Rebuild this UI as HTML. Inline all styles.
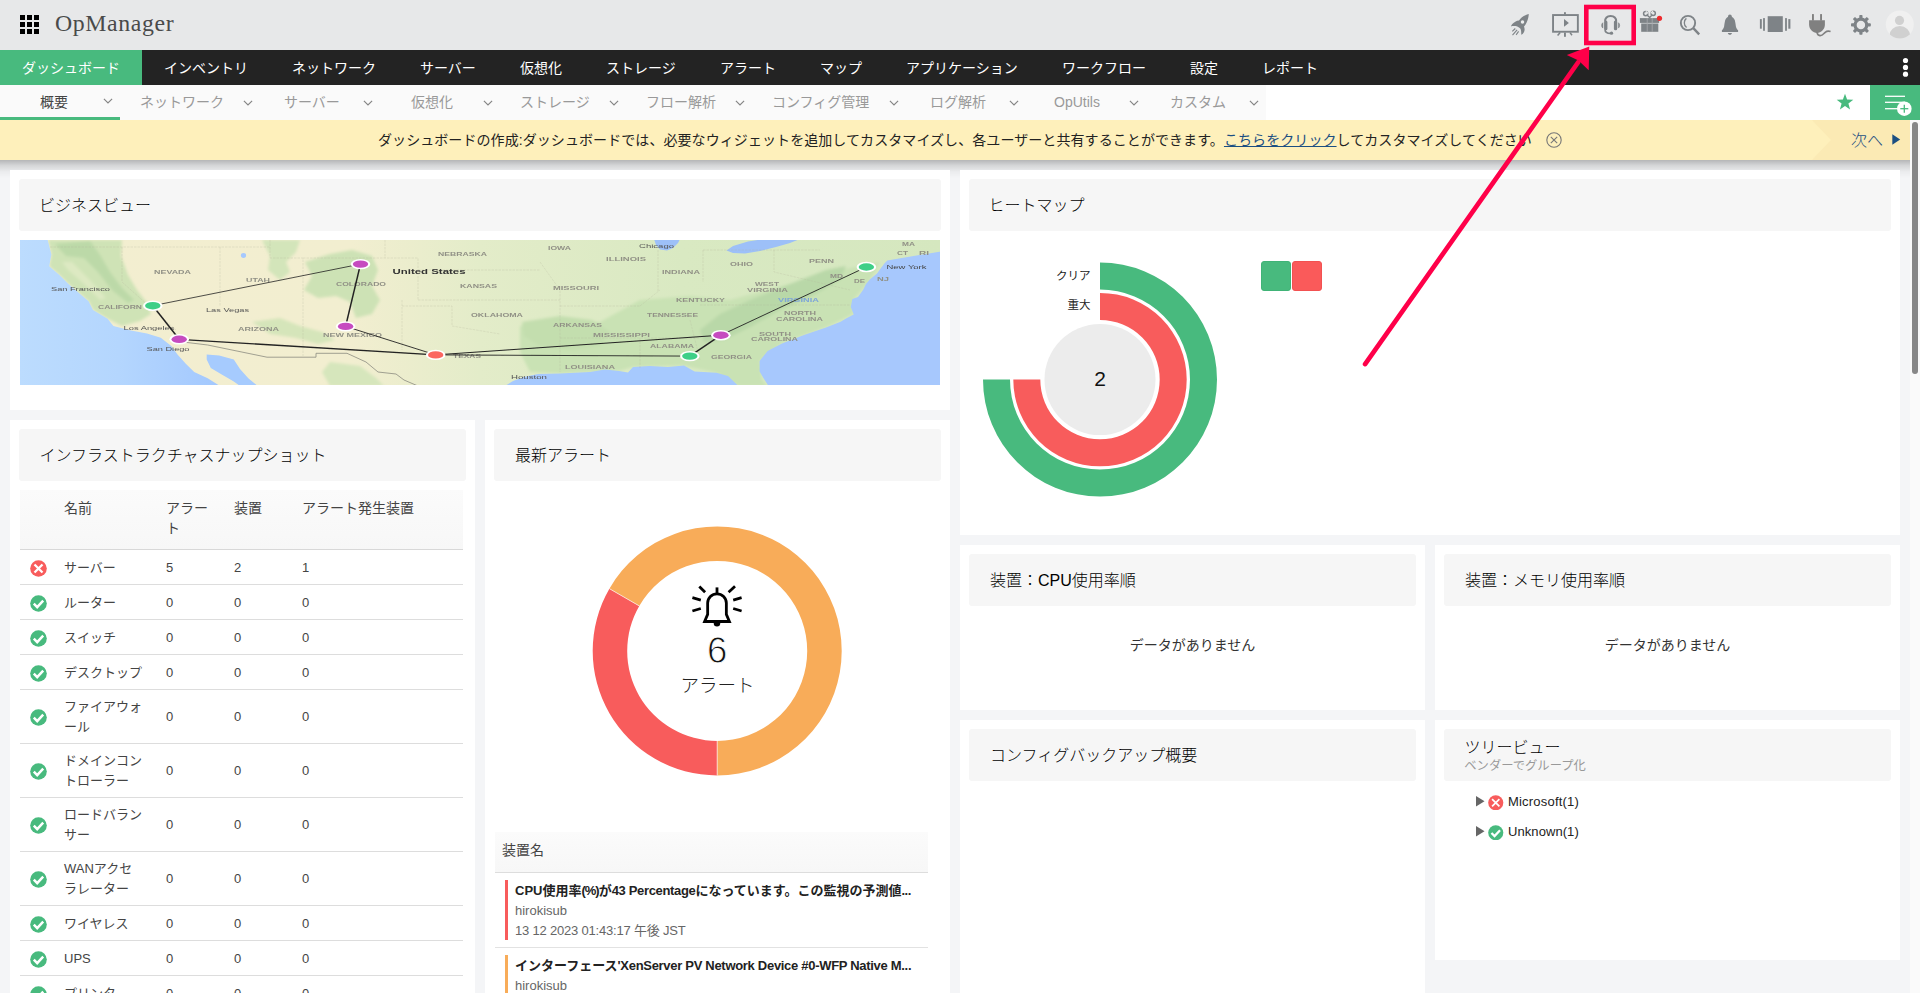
<!DOCTYPE html>
<html lang="ja">
<head>
<meta charset="utf-8">
<title>OpManager</title>
<style>
*{box-sizing:border-box;margin:0;padding:0}
html,body{width:1920px;height:993px;overflow:hidden;background:#f4f5f7}
body{font-family:"Liberation Sans","Noto Sans CJK JP",sans-serif;font-size:14px;color:#333;position:relative}
.abs{position:absolute}
#page{position:absolute;left:0;top:0;width:1920px;height:993px;overflow:hidden;background:#f4f5f7}
/* header */
#hdr{position:absolute;left:0;top:0;width:1920px;height:50px;background:#e7e8e9}
#logo{position:absolute;left:55px;top:8px;font-family:"Liberation Serif",serif;font-size:23.8px;line-height:30px;letter-spacing:.62px;color:#4a4a4a;white-space:nowrap}
/* nav */
#nav{position:absolute;left:0;top:50px;width:1920px;height:35px;background:#232323}
#nav .t{position:absolute;top:0;height:35px;line-height:36px;color:#fff;font-size:14px;white-space:nowrap}
#nav .on{left:0;width:142px;background:#48ba7e;padding-left:22px}
/* subnav */
#sub{position:absolute;left:0;top:85px;width:1920px;height:35px;background:#fff}
#sub .bg{position:absolute;left:0;top:0;width:1266px;height:35px;background:#fafafa}
#sub .s{position:absolute;top:0;height:35px;line-height:35px;color:#999;font-size:14px;white-space:nowrap}
#sub .cv{position:absolute;top:10px;width:10px;height:10px}
/* banner */
#ban{position:absolute;left:0;top:120px;width:1910px;height:40px;background:#fef0bb}
#bantxt{position:absolute;left:378px;top:0;height:40px;line-height:41px;font-size:14px;letter-spacing:.075px;color:#222;white-space:nowrap}
#bantxt a{color:#1b4f82;text-decoration:underline}
#shadow{position:absolute;left:0;top:160px;width:1910px;height:18px;background:linear-gradient(to bottom,rgba(0,0,0,.26),rgba(0,0,0,.13) 30%,rgba(0,0,0,.04) 65%,rgba(0,0,0,0))}
/* cards */
.card{position:absolute;background:#fff}
.tb{position:absolute;background:#f6f6f6;border-radius:3px;height:52px}
.tt{position:absolute;font-size:16px;line-height:24px;color:#000;font-weight:300;white-space:nowrap}
.nd{position:absolute;font-size:14px;line-height:20px;color:#333;white-space:nowrap;text-align:center}
/* table */
.th{position:absolute;font-size:14px;line-height:20px;color:#444;white-space:nowrap}
.rl{position:absolute;left:20px;width:443px;height:1px;background:#ddd}
.c{position:absolute;font-size:13px;line-height:20px;color:#444;white-space:nowrap}
.ic{position:absolute;width:17px;height:17px}
</style>
</head>
<body>
<div id="page">

<!-- ===== header ===== -->
<div id="hdr">
  <svg class="abs" style="left:20px;top:15px" width="19" height="19" viewBox="0 0 19 19"><g fill="#000"><rect x="0" y="0" width="5" height="5"/><rect x="7" y="0" width="5" height="5"/><rect x="14" y="0" width="5" height="5"/><rect x="0" y="7" width="5" height="5"/><rect x="7" y="7" width="5" height="5"/><rect x="14" y="7" width="5" height="5"/><rect x="0" y="14" width="5" height="5"/><rect x="7" y="14" width="5" height="5"/><rect x="14" y="14" width="5" height="5"/></g></svg>
  <div id="logo">OpManager</div>
  <!--ICONS-->
<svg class="abs" style="left:1500px;top:0" width="420" height="50" viewBox="1500 0 420 50">
<path d="M1528.8 14.1 C1526.5 14.6 1523.6 16 1521.9 17.3 C1520.6 18.3 1519.6 19.6 1519 20.6 C1517.6 20.7 1516.6 20.9 1515.7 21.4 C1514.2 22.1 1513.2 23 1512.3 23.9 C1511.6 24.7 1511.1 25.6 1510.9 26.4 C1512 26 1513 25.9 1514 26 C1515.3 26 1516.4 26.1 1517.3 26.4 C1518.6 26.9 1519.6 27.6 1520.3 28.5 C1520.8 29.2 1521 30 1521.1 31 C1521.2 32.3 1521.3 33.5 1521.3 34.8 C1522.3 34.3 1523.1 33.6 1523.6 32.7 C1524.3 31.6 1524.7 30.4 1524.6 29.3 C1524.6 28.3 1524.4 27.3 1524 26.4 C1525 25.3 1525.9 24.1 1526.5 22.7 C1527.3 21.2 1527.9 19.6 1528.2 18.1 C1528.5 16.8 1528.7 15.5 1528.8 14.1 Z" fill="#7e8387"/>
<circle cx="1522.5" cy="22" r="1.75" fill="#eceded"/>
<path d="M1515.3 28.5 L1512.3 31.4 M1517.1 29.8 L1512.5 35.2 M1518.6 31.4 L1516.1 34.8" stroke="#7e8387" stroke-width="1.1" fill="none"/>
<rect x="1553.05" y="15.05" width="24.8" height="16.7" fill="none" stroke="#7e8387" stroke-width="1.9"/>
<rect x="1564" y="12.2" width="1.9" height="2.2" fill="#7e8387"/><rect x="1564" y="32.5" width="1.9" height="4.3" fill="#7e8387"/>
<path d="M1564 19.1 L1568.9 22.9 L1564 26.8 Z" fill="#7e8387"/>
<path d="M1560.2 32.6 L1557.6 35.6 M1570 32.6 L1572 35.3" stroke="#7e8387" stroke-width="1.5" fill="none"/>
<path d="M1605.1 21.5 C1605.1 17.6 1607.3 15.9 1610.6 15.9 C1613.9 15.9 1616.2 17.6 1616.2 21.5" fill="none" stroke="#7e8387" stroke-width="2"/>
<rect x="1604.1" y="20.4" width="3.3" height="9.8" rx="1.5" fill="#7e8387"/><rect x="1613.9" y="20.4" width="3.3" height="9.8" rx="1.5" fill="#7e8387"/>
<path d="M1602.9 22.7 C1601.2 23.6 1601.2 27.2 1602.9 28.1 Z M1618.4 22.7 C1620.1 23.6 1620.1 27.2 1618.4 28.1 Z" fill="#7e8387" stroke="#7e8387" stroke-width="0.5"/>
<path d="M1605 29.5 C1605 32 1606.6 33.4 1610.5 33.4" fill="none" stroke="#7e8387" stroke-width="1.6"/>
<circle cx="1611.5" cy="33.2" r="1.65" fill="#7e8387"/>
<rect x="1639.9" y="18.1" width="19.2" height="4.8" fill="#7e8387"/><rect x="1641.2" y="23.5" width="17.1" height="8.3" fill="#7e8387"/>
<path d="M1647.2 18.1 V31.8 M1652.2 18.1 V31.8" stroke="#a9acae" stroke-width="0.8"/>
<circle cx="1645.7" cy="13.6" r="2.15" fill="none" stroke="#7e8387" stroke-width="1.5"/><circle cx="1653.2" cy="13.3" r="2.15" fill="none" stroke="#7e8387" stroke-width="1.5"/>
<path d="M1647.3 15.3 L1649.7 17.6 L1651.7 15.2" fill="none" stroke="#7e8387" stroke-width="1.4"/>
<path d="M1645.8 11.4 L1648.3 13.6 M1653 11 L1650.8 13.4" stroke="#e7e8e9" stroke-width="1.3"/>
<circle cx="1659.5" cy="18.3" r="2.6" fill="#ee2a2e"/>
<circle cx="1688" cy="23" r="7.15" fill="none" stroke="#7e8387" stroke-width="1.9"/>
<path d="M1686.4 18.4 C1683.6 20.4 1683.6 25.4 1686.6 27.6" fill="none" stroke="#7e8387" stroke-width="1.3"/>
<path d="M1693.3 28.2 L1699.2 34.4" stroke="#7e8387" stroke-width="2.4" fill="none"/>
<circle cx="1729.9" cy="16.5" r="1.9" fill="#7e8387"/>
<path d="M1729.9 16.4 C1732.6 16.6 1734.2 18 1734.9 20.4 C1735.5 22.6 1735.6 24.6 1735.9 26.6 C1736.2 28.2 1736.9 29.3 1738.1 30.3 L1738.1 31.9 L1721.9 31.9 L1721.9 30.3 C1723.1 29.3 1723.8 28.2 1724.1 26.6 C1724.4 24.6 1724.5 22.6 1725.1 20.4 C1725.8 18 1727.2 16.6 1729.9 16.4 Z" fill="#7e8387"/>
<path d="M1727.9 33 L1731.9 33 C1731.9 35.4 1727.9 35.4 1727.9 33 Z" fill="#7e8387"/>
<rect x="1767.7" y="16.2" width="15.1" height="15.8" fill="#7e8387"/>
<rect x="1763.1" y="18.1" width="1.8" height="12.7" fill="#7e8387"/><rect x="1785.1" y="18.1" width="1.8" height="12.7" fill="#7e8387"/>
<rect x="1759.9" y="19.1" width="1.9" height="9.6" fill="#7e8387"/><rect x="1788.3" y="19.1" width="2.1" height="9.6" fill="#7e8387"/>
<rect x="1812" y="14.1" width="1.9" height="6.5" fill="#808080"/><rect x="1820.1" y="14.1" width="1.9" height="6.5" fill="#808080"/>
<path d="M1809.1 20.2 L1824.9 20.2 L1824.9 24.5 C1824.9 29.5 1821 32.9 1817 32.9 C1813 32.9 1809.1 29.5 1809.1 24.5 Z" fill="#808080"/>
<path d="M1817 32 C1817.2 34.2 1818 35.5 1820 35.7 C1822.6 35.9 1823.6 33.6 1825.2 32.3 C1826.8 31 1828.6 30.9 1830.6 31.5" fill="none" stroke="#808080" stroke-width="1.7"/>
<rect x="1859.30" y="15.06" width="3.2" height="4" rx="0.8" transform="rotate(0 1860.9 24.96)" fill="#7e8387"/><rect x="1859.30" y="15.06" width="3.2" height="4" rx="0.8" transform="rotate(45 1860.9 24.96)" fill="#7e8387"/><rect x="1859.30" y="15.06" width="3.2" height="4" rx="0.8" transform="rotate(90 1860.9 24.96)" fill="#7e8387"/><rect x="1859.30" y="15.06" width="3.2" height="4" rx="0.8" transform="rotate(135 1860.9 24.96)" fill="#7e8387"/><rect x="1859.30" y="15.06" width="3.2" height="4" rx="0.8" transform="rotate(180 1860.9 24.96)" fill="#7e8387"/><rect x="1859.30" y="15.06" width="3.2" height="4" rx="0.8" transform="rotate(225 1860.9 24.96)" fill="#7e8387"/><rect x="1859.30" y="15.06" width="3.2" height="4" rx="0.8" transform="rotate(270 1860.9 24.96)" fill="#7e8387"/><rect x="1859.30" y="15.06" width="3.2" height="4" rx="0.8" transform="rotate(315 1860.9 24.96)" fill="#7e8387"/>
<circle cx="1860.9" cy="24.96" r="5.85" fill="none" stroke="#7e8387" stroke-width="3.2"/>
<defs><clipPath id="av"><circle cx="1899.8" cy="24.5" r="14"/></clipPath></defs>
<circle cx="1899.8" cy="24.5" r="14" fill="#f0f0f0"/>
<g clip-path="url(#av)" fill="#d0d0d0"><circle cx="1899.5" cy="20.4" r="4.6"/><ellipse cx="1899.8" cy="36.3" rx="10.6" ry="10.3"/></g>
</svg>
<!--/ICONS-->
</div>

<!-- ===== nav ===== -->
<div id="nav">
  <div class="t on">ダッシュボード</div>
  <div class="t" style="left:164px">インベントリ</div>
  <div class="t" style="left:292px">ネットワーク</div>
  <div class="t" style="left:420px">サーバー</div>
  <div class="t" style="left:520px">仮想化</div>
  <div class="t" style="left:606px">ストレージ</div>
  <div class="t" style="left:720px">アラート</div>
  <div class="t" style="left:820px">マップ</div>
  <div class="t" style="left:906px">アプリケーション</div>
  <div class="t" style="left:1062px">ワークフロー</div>
  <div class="t" style="left:1190px">設定</div>
  <div class="t" style="left:1262px">レポート</div>
  <svg class="abs" style="left:1902px;top:7px" width="7" height="21" viewBox="0 0 7 21"><g fill="#fff"><circle cx="3.5" cy="3.5" r="2.6"/><circle cx="3.5" cy="10.4" r="2.6"/><circle cx="3.5" cy="17.2" r="2.6"/></g></svg>
</div>

<!-- ===== subnav ===== -->
<div id="sub">
  <div class="bg"></div>
  <div class="abs" style="left:0;top:32px;width:120px;height:3px;background:#48ba7e"></div>
  <div class="s" style="left:40px;color:#444">概要</div>
  <div class="s" style="left:140px">ネットワーク</div>
  <div class="s" style="left:284px">サーバー</div>
  <div class="s" style="left:411px">仮想化</div>
  <div class="s" style="left:520px">ストレージ</div>
  <div class="s" style="left:646px">フロー解析</div>
  <div class="s" style="left:772px">コンフィグ管理</div>
  <div class="s" style="left:930px">ログ解析</div>
  <div class="s" style="left:1054px">OpUtils</div>
  <div class="s" style="left:1170px">カスタム</div>
  <!--CHEVRONS-->
<svg class="abs" style="left:103.1px;top:12.6px" width="10" height="7" viewBox="0 0 10 7"><path d="M0.9 0.8 L5 5 L9.1 0.8" fill="none" stroke="#858585" stroke-width="1.15"/></svg>
<svg class="abs" style="left:243.0px;top:14.6px" width="10" height="7" viewBox="0 0 10 7"><path d="M0.9 0.8 L5 5 L9.1 0.8" fill="none" stroke="#858585" stroke-width="1.15"/></svg>
<svg class="abs" style="left:363.0px;top:14.6px" width="10" height="7" viewBox="0 0 10 7"><path d="M0.9 0.8 L5 5 L9.1 0.8" fill="none" stroke="#858585" stroke-width="1.15"/></svg>
<svg class="abs" style="left:483.0px;top:14.6px" width="10" height="7" viewBox="0 0 10 7"><path d="M0.9 0.8 L5 5 L9.1 0.8" fill="none" stroke="#858585" stroke-width="1.15"/></svg>
<svg class="abs" style="left:609.0px;top:14.6px" width="10" height="7" viewBox="0 0 10 7"><path d="M0.9 0.8 L5 5 L9.1 0.8" fill="none" stroke="#858585" stroke-width="1.15"/></svg>
<svg class="abs" style="left:735.0px;top:14.6px" width="10" height="7" viewBox="0 0 10 7"><path d="M0.9 0.8 L5 5 L9.1 0.8" fill="none" stroke="#858585" stroke-width="1.15"/></svg>
<svg class="abs" style="left:889.0px;top:14.6px" width="10" height="7" viewBox="0 0 10 7"><path d="M0.9 0.8 L5 5 L9.1 0.8" fill="none" stroke="#858585" stroke-width="1.15"/></svg>
<svg class="abs" style="left:1009.0px;top:14.6px" width="10" height="7" viewBox="0 0 10 7"><path d="M0.9 0.8 L5 5 L9.1 0.8" fill="none" stroke="#858585" stroke-width="1.15"/></svg>
<svg class="abs" style="left:1129.0px;top:14.6px" width="10" height="7" viewBox="0 0 10 7"><path d="M0.9 0.8 L5 5 L9.1 0.8" fill="none" stroke="#858585" stroke-width="1.15"/></svg>
<svg class="abs" style="left:1249.0px;top:14.6px" width="10" height="7" viewBox="0 0 10 7"><path d="M0.9 0.8 L5 5 L9.1 0.8" fill="none" stroke="#858585" stroke-width="1.15"/></svg>
<!--/CHEVRONS-->
  <svg class="abs" style="left:1836px;top:8px" width="18" height="18" viewBox="0 0 18 18"><path d="M9 0.8 L11.1 6.6 L17.3 6.8 L12.4 10.6 L14.1 16.6 L9 13.1 L3.9 16.6 L5.6 10.6 L0.7 6.8 L6.9 6.6 Z" fill="#48ba7e"/></svg>
  <div class="abs" style="left:1870px;top:0;width:50px;height:35px;background:#48ba7e"></div>
  <svg class="abs" style="left:1870px;top:0" width="50" height="35" viewBox="0 0 50 35"><g stroke="#fff" stroke-width="1.3"><line x1="15" y1="11.3" x2="35" y2="11.3"/><line x1="15" y1="17.3" x2="35" y2="17.3"/><line x1="15" y1="23.7" x2="35" y2="23.7"/></g><circle cx="34.3" cy="23.7" r="7.3" fill="#fff"/><g stroke="#48ba7e" stroke-width="1.3"><line x1="34.3" y1="19.7" x2="34.3" y2="27.7"/><line x1="30.3" y1="23.7" x2="38.3" y2="23.7"/></g></svg>
</div>

<!-- ===== banner ===== -->
<div id="ban">
  <svg class="abs" style="left:1800px;top:0" width="110" height="40" viewBox="0 0 110 40"><path d="M12 0 L110 0 L110 40 L12 40 L31 20 Z" fill="#fbeab4"/></svg>
  <div id="bantxt">ダッシュボードの作成:ダッシュボードでは、必要なウィジェットを追加してカスタマイズし、各ユーザーと共有することができます。<a>こちらをクリック</a>してカスタマイズしてください</div>
  <svg class="abs" style="left:1545px;top:11px" width="18" height="18" viewBox="0 0 18 18"><circle cx="9" cy="9" r="7.2" fill="none" stroke="#777" stroke-width="1.1"/><path d="M5.8 5.8 L12.2 12.2 M12.2 5.8 L5.8 12.2" stroke="#777" stroke-width="1.1" fill="none"/></svg>
  <div class="abs" style="left:1851px;top:0;height:40px;line-height:41px;font-size:16px;font-weight:300;color:#1b4f82;white-space:nowrap">次へ</div>
  <svg class="abs" style="left:1892px;top:14px" width="9" height="11" viewBox="0 0 9 11"><path d="M0.3 0.3 L8.2 5.5 L0.3 10.7 Z" fill="#1b4f82"/></svg>
</div>
<div id="shadow"></div>

<!-- ===== cards ===== -->
<div class="card" style="left:10px;top:170px;width:940px;height:240px"></div>
<div class="card" style="left:960px;top:170px;width:940px;height:365px"></div>
<div class="card" style="left:10px;top:420px;width:465px;height:600px"></div>
<div class="card" style="left:485px;top:420px;width:465px;height:600px"></div>
<div class="card" style="left:960px;top:545px;width:465px;height:165px"></div>
<div class="card" style="left:1435px;top:545px;width:465px;height:165px"></div>
<div class="card" style="left:960px;top:720px;width:465px;height:300px"></div>
<div class="card" style="left:1435px;top:720px;width:465px;height:240px"></div>

<div class="tb" style="left:19px;top:179px;width:922px"></div>
<div class="tb" style="left:969px;top:179px;width:922px"></div>
<div class="tb" style="left:19px;top:429px;width:447px"></div>
<div class="tb" style="left:494px;top:429px;width:447px"></div>
<div class="tb" style="left:969px;top:554px;width:447px"></div>
<div class="tb" style="left:1444px;top:554px;width:447px"></div>
<div class="tb" style="left:969px;top:729px;width:447px"></div>
<div class="tb" style="left:1444px;top:729px;width:447px"></div>

<div class="tt" style="left:39px;top:194px">ビジネスビュー</div>
<div class="tt" style="left:988.5px;top:194px">ヒートマップ</div>
<div class="tt" style="left:39.5px;top:444px">インフラストラクチャスナップショット</div>
<div class="tt" style="left:515px;top:444px">最新アラート</div>
<div class="tt" style="left:990px;top:569px">装置：CPU使用率順</div>
<div class="tt" style="left:1465px;top:569px">装置：メモリ使用率順</div>
<div class="tt" style="left:990px;top:744px">コンフィグバックアップ概要</div>
<div class="tt" style="left:1464.5px;top:736px">ツリービュー</div>
<div class="abs" style="left:1464.3px;top:756.6px;font-size:12.3px;line-height:18px;color:#999;white-space:nowrap">ベンダーでグループ化</div>

<div class="nd" style="left:960px;top:635px;width:465px">データがありません</div>
<div class="nd" style="left:1435px;top:635px;width:465px">データがありません</div>

<!--MAP-->
<svg class="abs" style="left:20px;top:240px" width="920" height="145" viewBox="20 240 920 145">
<defs><linearGradient id="lg" x1="0" x2="1" y1="0" y2="0"><stop offset="0" stop-color="#f3eed0"/><stop offset=".36" stop-color="#f2eed0"/><stop offset=".5" stop-color="#e3ecc9"/><stop offset=".72" stop-color="#d9e9c2"/><stop offset="1" stop-color="#d5e7bf"/></linearGradient>
<linearGradient id="pg" x1="0" x2="1" y1="0" y2="0"><stop offset="0" stop-color="#bcdcfe"/><stop offset=".5" stop-color="#b4d6fe"/><stop offset="1" stop-color="#a3c8fe"/></linearGradient>
<filter id="b1" x="-5%" y="-5%" width="110%" height="110%"><feGaussianBlur stdDeviation="1.6"/></filter><filter id="b2" x="-5%" y="-5%" width="110%" height="110%"><feGaussianBlur stdDeviation="0.7"/></filter><filter id="b3"><feGaussianBlur stdDeviation="0.35"/></filter></defs>
<rect x="20" y="240" width="920" height="145" fill="url(#lg)"/>
<g filter="url(#b1)">
<polygon points="48.0,240.0 122.0,240.0 121.0,256.0 128.0,275.0 137.0,290.0 147.0,303.0 151.0,314.0 140.0,321.0 122.0,326.0 107.6,318.8 93.0,310.0 88.6,301.3 78.4,292.6 68.2,283.8 59.4,275.0 49.2,266.3 51.4,254.6" fill="#cfe3b6"/>
<polygon points="55.0,244.0 90.0,241.0 100.0,255.0 110.0,272.0 122.0,288.0 134.0,300.0 128.0,303.0 112.0,290.0 98.0,272.0 84.0,258.0 66.0,256.0" fill="#bcd9a8"/>
<polygon points="62.0,262.0 72.0,262.0 90.0,280.0 106.0,298.0 100.0,300.0 84.0,284.0 68.0,270.0" fill="#dde9c2"/>
<polygon points="305.0,262.0 330.0,254.0 352.0,250.0 372.0,256.0 378.0,270.0 372.0,286.0 380.0,300.0 372.0,314.0 356.0,318.0 350.0,302.0 336.0,296.0 318.0,298.0 304.0,290.0 312.0,276.0" fill="#cde2b5"/>
<polygon points="262.0,240.0 300.0,240.0 296.0,252.0 286.0,262.0 290.0,272.0 280.0,280.0 268.0,270.0 270.0,256.0" fill="#d3e5ba"/>
<polygon points="252.0,322.0 280.0,318.0 300.0,326.0 322.0,332.0 335.0,340.0 318.0,344.0 296.0,338.0 270.0,334.0" fill="#d5e5ba"/>
<polygon points="330.0,362.0 360.0,366.0 376.0,378.0 384.0,386.0 330.0,386.0 322.0,372.0" fill="#d6e6bc"/>
<polygon points="520.0,326.0 560.0,318.0 600.0,322.0 640.0,300.0 690.0,296.0 730.0,300.0 790.0,284.0 850.0,268.0 880.0,262.0 870.0,280.0 853.0,300.0 853.0,314.0 826.0,327.0 782.0,343.0 760.0,361.0 762.0,380.0 767.0,386.0 738.0,386.0 716.0,372.8 684.0,365.5 633.0,367.0 619.0,371.0 560.0,373.5 530.0,372.0 520.0,352.0" fill="#c9e2b4"/>
<polygon points="522.0,322.0 560.0,316.0 592.0,320.0 610.0,332.0 600.0,346.0 572.0,350.0 540.0,346.0 524.0,336.0" fill="#c3deae"/>
<polygon points="700.0,330.0 720.0,314.0 750.0,300.0 790.0,284.0 826.0,270.0 846.0,266.0 840.0,280.0 812.0,296.0 780.0,310.0 752.0,326.0 724.0,340.0 704.0,342.0" fill="#b9d8a8"/>
</g>
<g filter="url(#b2)">
<polygon points="19.0,239.0 47.7,240.0 51.4,254.6 49.2,266.3 59.4,275.0 68.2,283.8 78.4,292.6 88.6,301.3 93.0,310.0 107.6,318.8 113.4,326.0 131.0,330.5 147.0,333.4 160.8,337.7 171.3,346.0 177.5,354.4 185.8,363.8 194.2,372.0 207.7,378.3 219.2,385.5 19.0,386.0" fill="url(#pg)"/>
<polygon points="206.7,354.4 219.2,355.4 233.8,359.6 240.0,369.0 248.3,378.3 257.7,386.0 240.0,386.0 233.8,381.5 221.3,374.2 210.8,368.0 206.7,359.6" fill="#a6cbfe"/>
<polygon points="505.0,386.0 513.0,381.0 524.0,377.0 538.0,374.0 560.0,373.5 590.0,372.0 605.0,369.5 619.0,371.0 628.0,372.5 633.0,367.0 650.0,366.0 668.0,367.0 684.0,365.5 694.6,371.4 716.5,372.8 728.0,376.0 738.4,386.0" fill="#a6c9fe"/>
<polygon points="941.0,251.5 913.6,256.0 887.3,260.4 884.4,263.4 881.0,268.0 877.0,273.6 869.8,279.4 866.0,284.0 863.0,290.0 858.0,297.0 852.3,299.0 850.8,307.0 853.7,314.5 846.0,318.5 840.6,321.8 826.0,327.6 804.0,334.9 782.0,343.6 767.6,351.0 759.6,361.0 759.6,371.4 764.0,379.0 768.5,386.0 941.0,386.0" fill="#a7c8fd"/>
<polygon points="654.0,239.0 656.0,245.0 660.0,249.5 667.0,250.5 673.0,248.0 678.0,243.0 680.0,239.0" fill="#9dc0f8"/>
<polygon points="726.5,250.5 733.0,253.0 745.0,253.5 760.0,251.0 776.0,247.0 790.0,243.0 800.0,239.0 764.0,239.0 748.0,241.5 733.0,246.0" fill="#9dc0f8"/>
<ellipse cx="243.5" cy="255.5" rx="2.6" ry="2.4" fill="#a6c9fe"/>
</g>
<g stroke="#b4b39c" stroke-width="0.5" fill="none" stroke-dasharray="2.5 1" opacity=".5">
<path d="M50 247 H270 M122 247 V282 L176 330 M220 247 V306 M270 240 V258 H303 V356 M303 258 H418 V300 M385 240 V258 M418 270 H540 M418 300 H560 M402 300 V350 M402 306 H452 V326 L500 334 M540 262 L560 290 V372 M560 306 H640 M560 338 H700 M640 306 L660 290 M658 250 V292 M703 250 V282 M640 338 V368 M690 320 L700 360 M703 250 H820 M774 250 V272 L850 290 M700 305 H850"/>
</g>
<path d="M179 341.5 L207.7 345 L267 357.2 L316 357.2 L316 353.3 L347 353.3 L366 362 L378 372 L396 374 L404 380 L418 386" stroke="#8b8b80" stroke-width="0.8" fill="none"/>
<g filter="url(#b3)"><text x="154" y="274" font-size="5.2" font-weight="bold" fill="#919186" textLength="37" lengthAdjust="spacingAndGlyphs" font-family="Liberation Sans, sans-serif">NEVADA</text><text x="246" y="281.5" font-size="5.2" font-weight="bold" fill="#919186" textLength="24" lengthAdjust="spacingAndGlyphs" font-family="Liberation Sans, sans-serif">UTAH</text><text x="98" y="308.5" font-size="5.2" font-weight="bold" fill="#919186" textLength="44" lengthAdjust="spacingAndGlyphs" font-family="Liberation Sans, sans-serif">CALIFORN</text><text x="238" y="330.5" font-size="5.2" font-weight="bold" fill="#919186" textLength="41" lengthAdjust="spacingAndGlyphs" font-family="Liberation Sans, sans-serif">ARIZONA</text><text x="336" y="285.5" font-size="5.2" font-weight="bold" fill="#919186" textLength="50" lengthAdjust="spacingAndGlyphs" font-family="Liberation Sans, sans-serif">COLORADO</text><text x="323" y="336.5" font-size="5.2" font-weight="bold" fill="#919186" textLength="59" lengthAdjust="spacingAndGlyphs" font-family="Liberation Sans, sans-serif">NEW MEXICO</text><text x="438" y="255.5" font-size="5.2" font-weight="bold" fill="#919186" textLength="49" lengthAdjust="spacingAndGlyphs" font-family="Liberation Sans, sans-serif">NEBRASKA</text><text x="460" y="288" font-size="5.2" font-weight="bold" fill="#919186" textLength="37" lengthAdjust="spacingAndGlyphs" font-family="Liberation Sans, sans-serif">KANSAS</text><text x="471" y="317" font-size="5.2" font-weight="bold" fill="#919186" textLength="52" lengthAdjust="spacingAndGlyphs" font-family="Liberation Sans, sans-serif">OKLAHOMA</text><text x="453" y="358" font-size="5.2" font-weight="bold" fill="#919186" textLength="28" lengthAdjust="spacingAndGlyphs" font-family="Liberation Sans, sans-serif">TEXAS</text><text x="548" y="250" font-size="5.2" font-weight="bold" fill="#919186" textLength="23" lengthAdjust="spacingAndGlyphs" font-family="Liberation Sans, sans-serif">IOWA</text><text x="606" y="261" font-size="5.2" font-weight="bold" fill="#919186" textLength="40" lengthAdjust="spacingAndGlyphs" font-family="Liberation Sans, sans-serif">ILLINOIS</text><text x="553" y="290" font-size="5.2" font-weight="bold" fill="#919186" textLength="46" lengthAdjust="spacingAndGlyphs" font-family="Liberation Sans, sans-serif">MISSOURI</text><text x="553" y="327" font-size="5.2" font-weight="bold" fill="#919186" textLength="49" lengthAdjust="spacingAndGlyphs" font-family="Liberation Sans, sans-serif">ARKANSAS</text><text x="593" y="337" font-size="5.2" font-weight="bold" fill="#919186" textLength="57" lengthAdjust="spacingAndGlyphs" font-family="Liberation Sans, sans-serif">MISSISSIPPI</text><text x="565" y="369" font-size="5.2" font-weight="bold" fill="#919186" textLength="50" lengthAdjust="spacingAndGlyphs" font-family="Liberation Sans, sans-serif">LOUISIANA</text><text x="650" y="348" font-size="5.2" font-weight="bold" fill="#919186" textLength="44" lengthAdjust="spacingAndGlyphs" font-family="Liberation Sans, sans-serif">ALABAMA</text><text x="662" y="273.5" font-size="5.2" font-weight="bold" fill="#919186" textLength="38" lengthAdjust="spacingAndGlyphs" font-family="Liberation Sans, sans-serif">INDIANA</text><text x="676" y="302" font-size="5.2" font-weight="bold" fill="#919186" textLength="49" lengthAdjust="spacingAndGlyphs" font-family="Liberation Sans, sans-serif">KENTUCKY</text><text x="647" y="317" font-size="5.2" font-weight="bold" fill="#919186" textLength="51" lengthAdjust="spacingAndGlyphs" font-family="Liberation Sans, sans-serif">TENNESSEE</text><text x="730" y="265.5" font-size="5.2" font-weight="bold" fill="#919186" textLength="23" lengthAdjust="spacingAndGlyphs" font-family="Liberation Sans, sans-serif">OHIO</text><text x="711" y="359" font-size="5.2" font-weight="bold" fill="#919186" textLength="41" lengthAdjust="spacingAndGlyphs" font-family="Liberation Sans, sans-serif">GEORGIA</text><text x="809" y="262.5" font-size="5.2" font-weight="bold" fill="#919186" textLength="25" lengthAdjust="spacingAndGlyphs" font-family="Liberation Sans, sans-serif">PENN</text><text x="755" y="286" font-size="5.2" font-weight="bold" fill="#919186" textLength="24" lengthAdjust="spacingAndGlyphs" font-family="Liberation Sans, sans-serif">WEST</text><text x="747" y="291.5" font-size="5.2" font-weight="bold" fill="#919186" textLength="41" lengthAdjust="spacingAndGlyphs" font-family="Liberation Sans, sans-serif">VIRGINIA</text><text x="778" y="302" font-size="5.2" font-weight="bold" fill="#7fa6d8" textLength="41" lengthAdjust="spacingAndGlyphs" font-family="Liberation Sans, sans-serif">VIRGINIA</text><text x="784" y="315" font-size="5.2" font-weight="bold" fill="#919186" textLength="32" lengthAdjust="spacingAndGlyphs" font-family="Liberation Sans, sans-serif">NORTH</text><text x="776" y="320.5" font-size="5.2" font-weight="bold" fill="#919186" textLength="47" lengthAdjust="spacingAndGlyphs" font-family="Liberation Sans, sans-serif">CAROLINA</text><text x="759" y="335.5" font-size="5.2" font-weight="bold" fill="#919186" textLength="32" lengthAdjust="spacingAndGlyphs" font-family="Liberation Sans, sans-serif">SOUTH</text><text x="751" y="341" font-size="5.2" font-weight="bold" fill="#919186" textLength="47" lengthAdjust="spacingAndGlyphs" font-family="Liberation Sans, sans-serif">CAROLINA</text><text x="830" y="278" font-size="5.2" font-weight="bold" fill="#919186" textLength="13" lengthAdjust="spacingAndGlyphs" font-family="Liberation Sans, sans-serif">MD</text><text x="854" y="282.5" font-size="5.2" font-weight="bold" fill="#919186" textLength="11" lengthAdjust="spacingAndGlyphs" font-family="Liberation Sans, sans-serif">DE</text><text x="877" y="281" font-size="5.2" font-weight="bold" fill="#919186" textLength="12" lengthAdjust="spacingAndGlyphs" font-family="Liberation Sans, sans-serif">NJ</text><text x="902" y="246" font-size="5.2" font-weight="bold" fill="#919186" textLength="13" lengthAdjust="spacingAndGlyphs" font-family="Liberation Sans, sans-serif">MA</text><text x="897" y="255" font-size="5.2" font-weight="bold" fill="#919186" textLength="11" lengthAdjust="spacingAndGlyphs" font-family="Liberation Sans, sans-serif">CT</text><text x="919" y="255" font-size="5.2" font-weight="bold" fill="#919186" textLength="10" lengthAdjust="spacingAndGlyphs" font-family="Liberation Sans, sans-serif">RI</text><text x="392.5" y="274" font-size="6.4" font-weight="bold" fill="#333" textLength="73" lengthAdjust="spacingAndGlyphs" font-family="Liberation Sans, sans-serif">United States</text><text x="51" y="291" font-size="6" font-weight="normal" fill="#555" textLength="59" lengthAdjust="spacingAndGlyphs" font-family="Liberation Sans, sans-serif">San Francisco</text><text x="123.5" y="329.5" font-size="6" font-weight="normal" fill="#555" textLength="51" lengthAdjust="spacingAndGlyphs" font-family="Liberation Sans, sans-serif">Los Angeles</text><text x="146.5" y="350.5" font-size="6" font-weight="normal" fill="#555" textLength="43" lengthAdjust="spacingAndGlyphs" font-family="Liberation Sans, sans-serif">San Diego</text><text x="206" y="312" font-size="6" font-weight="normal" fill="#555" textLength="43" lengthAdjust="spacingAndGlyphs" font-family="Liberation Sans, sans-serif">Las Vegas</text><text x="639" y="247.5" font-size="6" font-weight="normal" fill="#555" textLength="35" lengthAdjust="spacingAndGlyphs" font-family="Liberation Sans, sans-serif">Chicago</text><text x="511" y="378.5" font-size="6" font-weight="normal" fill="#555" textLength="36" lengthAdjust="spacingAndGlyphs" font-family="Liberation Sans, sans-serif">Houston</text><text x="886.5" y="268.5" font-size="6" font-weight="normal" fill="#444" textLength="40" lengthAdjust="spacingAndGlyphs" font-family="Liberation Sans, sans-serif">New York</text></g>
<g filter="url(#b3)">
<line x1="152.8" y1="305.7" x2="360.5" y2="264.1" stroke="#222" stroke-width="0.8"/>
<line x1="152.8" y1="305.7" x2="179.2" y2="339.3" stroke="#222" stroke-width="1.5"/>
<line x1="360.5" y1="264.1" x2="345.6" y2="326.4" stroke="#222" stroke-width="1.5"/>
<line x1="345.6" y1="326.4" x2="435.7" y2="354.9" stroke="#222" stroke-width="0.9"/>
<line x1="179.2" y1="339.3" x2="435.7" y2="354.9" stroke="#222" stroke-width="1.3"/>
<line x1="435.7" y1="354.9" x2="720.9" y2="335.2" stroke="#222" stroke-width="1.0"/>
<line x1="435.7" y1="354.9" x2="689.8" y2="356.1" stroke="#222" stroke-width="0.9"/>
<line x1="689.8" y1="356.1" x2="720.9" y2="335.2" stroke="#222" stroke-width="1.4"/>
<line x1="720.9" y1="335.2" x2="866.4" y2="267" stroke="#222" stroke-width="0.9"/>
<ellipse cx="152.8" cy="305.7" rx="9.8" ry="5.2" fill="#fff"/><ellipse cx="152.8" cy="305.7" rx="7.7" ry="3.7" fill="#3ecf87"/>
<ellipse cx="179.2" cy="339.3" rx="9.8" ry="5.2" fill="#fff"/><ellipse cx="179.2" cy="339.3" rx="7.7" ry="3.7" fill="#c64cc0"/>
<ellipse cx="360.5" cy="264.1" rx="9.8" ry="5.2" fill="#fff"/><ellipse cx="360.5" cy="264.1" rx="7.7" ry="3.7" fill="#c64cc0"/>
<ellipse cx="345.6" cy="326.4" rx="9.8" ry="5.2" fill="#fff"/><ellipse cx="345.6" cy="326.4" rx="7.7" ry="3.7" fill="#c64cc0"/>
<ellipse cx="435.7" cy="354.9" rx="9.8" ry="5.2" fill="#fff"/><ellipse cx="435.7" cy="354.9" rx="7.7" ry="3.7" fill="#fb6661"/>
<ellipse cx="720.9" cy="335.2" rx="9.8" ry="5.2" fill="#fff"/><ellipse cx="720.9" cy="335.2" rx="7.7" ry="3.7" fill="#c64cc0"/>
<ellipse cx="689.8" cy="356.1" rx="9.8" ry="5.2" fill="#fff"/><ellipse cx="689.8" cy="356.1" rx="7.7" ry="3.7" fill="#3ecf87"/>
<ellipse cx="866.4" cy="267" rx="9.8" ry="5.2" fill="#fff"/><ellipse cx="866.4" cy="267" rx="7.7" ry="3.7" fill="#3ecf87"/>
</g>
</svg>
<!--/MAP-->
<!--HEAT-->
<svg class="abs" style="left:960px;top:240px" width="300" height="290" viewBox="960 240 300 290">
<circle cx="1100" cy="379.6" r="55.5" fill="#ececec"/>
<path d="M1100.00 262.60 A117 117 0 1 1 983.00 379.60 L1010.00 379.60 A90 90 0 1 0 1100.00 289.60 Z" fill="#48ba7e"/>
<path d="M1100.00 292.90 A86.7 86.7 0 1 1 1013.30 379.60 L1040.30 379.60 A59.7 59.7 0 1 0 1100.00 319.90 Z" fill="#f85c5c"/>
<text x="1090.5" y="279.5" text-anchor="end" font-size="11.5" fill="#222" font-family="Liberation Sans, Noto Sans CJK JP, sans-serif">クリア</text>
<text x="1090.5" y="309" text-anchor="end" font-size="11.5" fill="#222" font-family="Liberation Sans, Noto Sans CJK JP, sans-serif">重大</text>
<text x="1100" y="385.8" text-anchor="middle" font-size="21" fill="#111" font-family="Liberation Sans, sans-serif">2</text>
</svg>
<div class="abs" style="left:1261px;top:261px;width:30px;height:30px;border-radius:3px;background:#48ba7e;border:1px solid #40b377"></div>
<div class="abs" style="left:1292px;top:261px;width:30px;height:30px;border-radius:3px;background:#fa5a5a;border:1px solid #f25151"></div>
<!--/HEAT-->
<!--TABLE-->
<div class="abs" style="left:20px;top:490px;width:443px;height:59px;background:linear-gradient(#fbfbfb,#f7f7f7)"></div>
<div class="rl" style="top:549px;background:#d8d8d8"></div>
<div class="th" style="left:64px;top:498px">名前</div>
<div class="th" style="left:166px;top:498px">アラー<br>ト</div>
<div class="th" style="left:234px;top:498px">装置</div>
<div class="th" style="left:302px;top:498px">アラート発生装置</div>
<svg class="ic" style="left:30.1px;top:559.8px" viewBox="0 0 17 17"><circle cx="8.5" cy="8.5" r="8.3" fill="#f85c5c"/><path d="M4.5 4.5 L12.5 12.5 M12.5 4.5 L4.5 12.5" stroke="#fff" stroke-width="2.3" fill="none"/></svg>
<div class="c" style="left:64px;top:557.9px">サーバー</div>
<div class="c" style="left:166px;top:557.9px">5</div>
<div class="c" style="left:234px;top:557.9px">2</div>
<div class="c" style="left:302px;top:557.9px">1</div>
<div class="rl" style="top:584px"></div>
<svg class="ic" style="left:30.1px;top:594.8px" viewBox="0 0 17 17"><circle cx="8.5" cy="8.5" r="8.3" fill="#48ba7e"/><path d="M3.8 8.7 L7.2 12.1 L13.2 5.7" stroke="#fff" stroke-width="2.5" fill="none"/></svg>
<div class="c" style="left:64px;top:592.9px">ルーター</div>
<div class="c" style="left:166px;top:592.9px">0</div>
<div class="c" style="left:234px;top:592.9px">0</div>
<div class="c" style="left:302px;top:592.9px">0</div>
<div class="rl" style="top:619px"></div>
<svg class="ic" style="left:30.1px;top:629.8px" viewBox="0 0 17 17"><circle cx="8.5" cy="8.5" r="8.3" fill="#48ba7e"/><path d="M3.8 8.7 L7.2 12.1 L13.2 5.7" stroke="#fff" stroke-width="2.5" fill="none"/></svg>
<div class="c" style="left:64px;top:627.9px">スイッチ</div>
<div class="c" style="left:166px;top:627.9px">0</div>
<div class="c" style="left:234px;top:627.9px">0</div>
<div class="c" style="left:302px;top:627.9px">0</div>
<div class="rl" style="top:654px"></div>
<svg class="ic" style="left:30.1px;top:664.8px" viewBox="0 0 17 17"><circle cx="8.5" cy="8.5" r="8.3" fill="#48ba7e"/><path d="M3.8 8.7 L7.2 12.1 L13.2 5.7" stroke="#fff" stroke-width="2.5" fill="none"/></svg>
<div class="c" style="left:64px;top:662.9px">デスクトップ</div>
<div class="c" style="left:166px;top:662.9px">0</div>
<div class="c" style="left:234px;top:662.9px">0</div>
<div class="c" style="left:302px;top:662.9px">0</div>
<div class="rl" style="top:689px"></div>
<svg class="ic" style="left:30.1px;top:709.3px" viewBox="0 0 17 17"><circle cx="8.5" cy="8.5" r="8.3" fill="#48ba7e"/><path d="M3.8 8.7 L7.2 12.1 L13.2 5.7" stroke="#fff" stroke-width="2.5" fill="none"/></svg>
<div class="c" style="left:64px;top:696.7px">ファイアウォ<br>ール</div>
<div class="c" style="left:166px;top:707.4px">0</div>
<div class="c" style="left:234px;top:707.4px">0</div>
<div class="c" style="left:302px;top:707.4px">0</div>
<div class="rl" style="top:743px"></div>
<svg class="ic" style="left:30.1px;top:763.3px" viewBox="0 0 17 17"><circle cx="8.5" cy="8.5" r="8.3" fill="#48ba7e"/><path d="M3.8 8.7 L7.2 12.1 L13.2 5.7" stroke="#fff" stroke-width="2.5" fill="none"/></svg>
<div class="c" style="left:64px;top:750.7px">ドメインコン<br>トローラー</div>
<div class="c" style="left:166px;top:761.4px">0</div>
<div class="c" style="left:234px;top:761.4px">0</div>
<div class="c" style="left:302px;top:761.4px">0</div>
<div class="rl" style="top:797px"></div>
<svg class="ic" style="left:30.1px;top:817.3px" viewBox="0 0 17 17"><circle cx="8.5" cy="8.5" r="8.3" fill="#48ba7e"/><path d="M3.8 8.7 L7.2 12.1 L13.2 5.7" stroke="#fff" stroke-width="2.5" fill="none"/></svg>
<div class="c" style="left:64px;top:804.7px">ロードバラン<br>サー</div>
<div class="c" style="left:166px;top:815.4px">0</div>
<div class="c" style="left:234px;top:815.4px">0</div>
<div class="c" style="left:302px;top:815.4px">0</div>
<div class="rl" style="top:851px"></div>
<svg class="ic" style="left:30.1px;top:871.3px" viewBox="0 0 17 17"><circle cx="8.5" cy="8.5" r="8.3" fill="#48ba7e"/><path d="M3.8 8.7 L7.2 12.1 L13.2 5.7" stroke="#fff" stroke-width="2.5" fill="none"/></svg>
<div class="c" style="left:64px;top:858.7px">WANアクセ<br>ラレーター</div>
<div class="c" style="left:166px;top:869.4px">0</div>
<div class="c" style="left:234px;top:869.4px">0</div>
<div class="c" style="left:302px;top:869.4px">0</div>
<div class="rl" style="top:905px"></div>
<svg class="ic" style="left:30.1px;top:915.8px" viewBox="0 0 17 17"><circle cx="8.5" cy="8.5" r="8.3" fill="#48ba7e"/><path d="M3.8 8.7 L7.2 12.1 L13.2 5.7" stroke="#fff" stroke-width="2.5" fill="none"/></svg>
<div class="c" style="left:64px;top:913.9px">ワイヤレス</div>
<div class="c" style="left:166px;top:913.9px">0</div>
<div class="c" style="left:234px;top:913.9px">0</div>
<div class="c" style="left:302px;top:913.9px">0</div>
<div class="rl" style="top:940px"></div>
<svg class="ic" style="left:30.1px;top:950.8px" viewBox="0 0 17 17"><circle cx="8.5" cy="8.5" r="8.3" fill="#48ba7e"/><path d="M3.8 8.7 L7.2 12.1 L13.2 5.7" stroke="#fff" stroke-width="2.5" fill="none"/></svg>
<div class="c" style="left:64px;top:948.9px">UPS</div>
<div class="c" style="left:166px;top:948.9px">0</div>
<div class="c" style="left:234px;top:948.9px">0</div>
<div class="c" style="left:302px;top:948.9px">0</div>
<div class="rl" style="top:975px"></div>
<svg class="ic" style="left:30.1px;top:985.8px" viewBox="0 0 17 17"><circle cx="8.5" cy="8.5" r="8.3" fill="#48ba7e"/><path d="M3.8 8.7 L7.2 12.1 L13.2 5.7" stroke="#fff" stroke-width="2.5" fill="none"/></svg>
<div class="c" style="left:64px;top:983.9px">プリンタ</div>
<div class="c" style="left:166px;top:983.9px">0</div>
<div class="c" style="left:234px;top:983.9px">0</div>
<div class="c" style="left:302px;top:983.9px">0</div>
<div class="rl" style="top:1010px"></div>
<!--/TABLE-->
<!--DONUT-->
<svg class="abs" style="left:585px;top:520px" width="265" height="265" viewBox="585 520 265 265">
<path d="M609.38 588.65 A124.5 124.5 0 1 1 717.20 775.40 L717.20 740.90 A90 90 0 1 0 639.26 605.90 Z" fill="#f8ac59"/>
<path d="M717.20 775.40 A124.5 124.5 0 0 1 609.38 588.65 L639.26 605.90 A90 90 0 0 0 717.20 740.90 Z" fill="#f85c5c"/>
<path d="M717.2 741 L717.2 775.5 M639.26 605.90 L609.38 588.65" stroke="#fff" stroke-width="0.8" opacity=".8"/>
<g fill="none" stroke="#000" stroke-width="2.8" stroke-linecap="butt">
<path d="M717 587.4 L717 594"/>
<path d="M707.65 614.4 L707.65 603.1 A9.35 9.35 0 0 1 726.35 603.1 L726.35 614.4 L729.4 621.5 L704.6 621.5 Z" stroke-linejoin="miter"/>
<path d="M699.3 586.5 L705.1 592.2 M735.0 586.3 L728.6 592.2 M692.4 597.7 L700.8 600.1 M741.6 597.7 L733.2 600.1 M692.4 611 L700.8 608.5 M741.6 611 L733.2 608.5"/>
</g>
<path d="M713.7 623 A3.3 3.6 0 0 0 720.3 623 Z" fill="#000"/>
<text x="717.2" y="663.4" text-anchor="middle" font-size="36.5" fill="#111" font-family="Liberation Sans, sans-serif" stroke="#fff" stroke-width="0.9">6</text>
<text x="717.4" y="691.8" text-anchor="middle" font-size="18.5" font-weight="300" fill="#222" font-family="Liberation Sans, Noto Sans CJK JP, sans-serif">アラート</text>
</svg>
<!--/DONUT-->
<!--ALERTS-->
<div class="abs" style="left:495px;top:832px;width:433px;height:40px;background:linear-gradient(#fbfbfb,#f7f7f7)"></div>
<div class="abs" style="left:495px;top:872px;width:433px;height:1px;background:#ddd"></div>
<div class="abs" style="left:502px;top:840px;font-size:14px;line-height:20px;color:#444">装置名</div>
<div class="abs" style="left:505px;top:880px;width:3px;height:60px;background:#f85c5c"></div>
<div class="abs" style="left:515px;top:881px;font-size:13px;line-height:20px;color:#222;font-weight:bold;white-space:nowrap" id="al1">CPU使用率<span style="letter-spacing:-1px">(%)</span>が<span style="letter-spacing:-.34px">43 Percentage</span>になっています。この監視の予測値<span style="letter-spacing:-.5px">...</span></div>
<div class="abs" style="left:515px;top:901px;font-size:13px;line-height:20px;color:#666;white-space:nowrap">hirokisub</div>
<div class="abs" style="left:515px;top:921px;font-size:13px;line-height:20px;color:#666;white-space:nowrap;letter-spacing:-.2px" id="al1d">13 12 2023 01:43:17 午後 JST</div>
<div class="abs" style="left:495px;top:947px;width:433px;height:1px;background:#e2e2e2"></div>
<div class="abs" style="left:505px;top:955px;width:3px;height:60px;background:#f8ac59"></div>
<div class="abs" style="left:515px;top:956px;font-size:13px;line-height:20px;color:#222;font-weight:bold;white-space:nowrap" id="al2">インターフェース<span style="letter-spacing:-.3px">'XenServer PV Network Device #0-WFP Native M...</span></div>
<div class="abs" style="left:515px;top:976px;font-size:13px;line-height:20px;color:#666;white-space:nowrap">hirokisub</div>
<!--/ALERTS-->
<!--TREE-->
<svg class="abs" style="left:1476px;top:796.0px" width="9" height="11" viewBox="0 0 9 11"><path d="M0 0 L8.5 5.2 L0 10.4 Z" fill="#666"/></svg>
<svg class="ic" style="width:15.5px;height:15.5px;left:1488.25px;top:794.65px" viewBox="0 0 17 17"><circle cx="8.5" cy="8.5" r="8.3" fill="#f85c5c"/><path d="M4.5 4.5 L12.5 12.5 M12.5 4.5 L4.5 12.5" stroke="#fff" stroke-width="1.9" fill="none"/></svg>
<div class="abs" style="left:1508px;top:793.3px;font-size:13px;line-height:18px;color:#222;white-space:nowrap;letter-spacing:0.2px">Microsoft(1)</div>
<svg class="abs" style="left:1476px;top:826.0px" width="9" height="11" viewBox="0 0 9 11"><path d="M0 0 L8.5 5.2 L0 10.4 Z" fill="#666"/></svg>
<svg class="ic" style="width:15.5px;height:15.5px;left:1488.25px;top:824.65px" viewBox="0 0 17 17"><circle cx="8.5" cy="8.5" r="8.3" fill="#48ba7e"/><path d="M3.8 8.7 L7.2 12.1 L13.2 5.7" stroke="#fff" stroke-width="2.5" fill="none"/></svg>
<div class="abs" style="left:1508px;top:823.3px;font-size:13px;line-height:18px;color:#222;white-space:nowrap;letter-spacing:0.07px">Unknown(1)</div>
<!--/TREE-->

<!-- scrollbar -->
<div class="abs" style="left:1910px;top:120px;width:10px;height:873px;background:#fafafa"></div>
<div class="abs" style="left:1912px;top:122px;width:6px;height:252px;border-radius:3px;background:#888"></div>

<!--ARROW-->
<svg class="abs" style="left:1340px;top:0;pointer-events:none" width="320" height="380" viewBox="1340 0 320 380">
<rect x="1586.3" y="7" width="47.4" height="36" fill="none" stroke="#ff0049" stroke-width="4.6"/>
<line x1="1365.1" y1="364.1" x2="1578" y2="62.5" stroke="#ff0049" stroke-width="4.7" stroke-linecap="round"/>
<path d="M1589.3 46.6 L1566.8 55 L1578.5 60.5 L1588.7 70.3 Z" fill="#ff0049"/>
</svg>
<!--/ARROW-->
</div>
</body>
</html>
